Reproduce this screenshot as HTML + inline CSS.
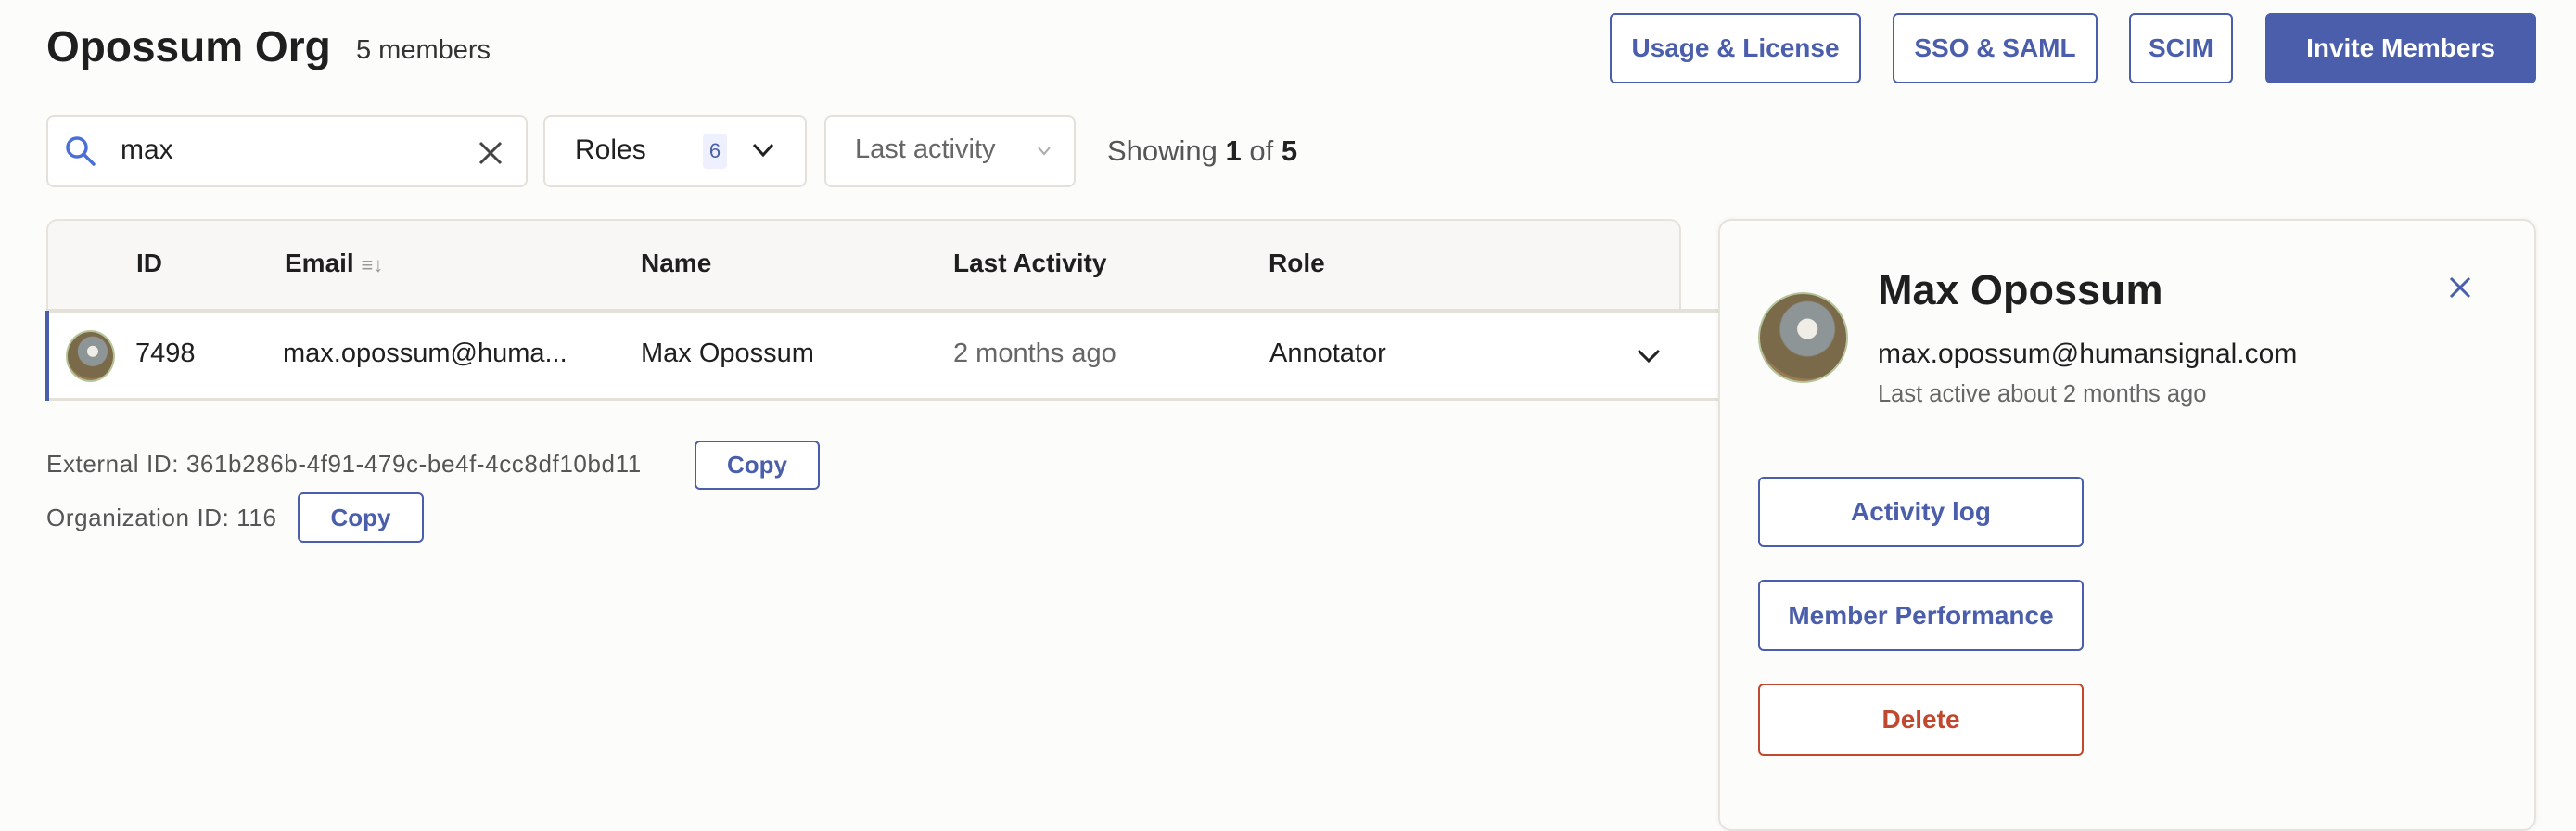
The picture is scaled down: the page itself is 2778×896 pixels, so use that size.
<!DOCTYPE html>
<html><head><meta charset="utf-8"><style>
*{box-sizing:border-box;margin:0;padding:0}
body{width:2778px;height:866px;background:#fcfcfb;font-family:"Liberation Sans",sans-serif;color:#1f1f1f;position:relative;overflow:hidden}
.a{position:absolute}
.btn{position:absolute;border:2px solid #4a5eab;border-radius:6px;color:#4a5eab;font-weight:bold;font-size:28px;display:flex;align-items:center;justify-content:center;background:#fff}
.box{position:absolute;border:2px solid #e4e1da;border-radius:8px;background:#fff}
.h{font-weight:bold;font-size:28px;position:absolute;top:268px}
.c{font-size:29px;position:absolute;top:365px}
.av{position:absolute;border-radius:50%;background:radial-gradient(circle at 55% 40%,#f0ece6 0 14%,#8d9597 15% 38%,#7b6a4a 40% 70%,#9a7c55 72%);border:2px solid #b5c59a}
</style></head><body>
<div class="a" style="left:50px;top:23px;font-size:46px;font-weight:bold">Opossum Org</div>
<div class="a" style="left:384px;top:38px;font-size:29px;color:#333">5 members</div>

<div class="btn" style="left:1736px;top:14px;width:271px;height:76px">Usage &amp; License</div>
<div class="btn" style="left:2041px;top:14px;width:221px;height:76px">SSO &amp; SAML</div>
<div class="btn" style="left:2296px;top:14px;width:112px;height:76px">SCIM</div>
<div class="btn" style="left:2443px;top:14px;width:292px;height:76px;background:#4a5eab;color:#fff">Invite Members</div>

<div class="box" style="left:50px;top:124px;width:519px;height:78px"></div>
<svg class="a" style="left:68px;top:144px" width="40" height="40" viewBox="0 0 40 40"><circle cx="15" cy="15" r="10" fill="none" stroke="#4a6fd8" stroke-width="3.5"/><path d="M22 22l11 11" stroke="#4a6fd8" stroke-width="3.5" stroke-linecap="round"/></svg>
<div class="a" style="left:130px;top:145px;font-size:30px">max</div>
<svg class="a" style="left:514px;top:150px" width="30" height="30"><path d="M4 4l22 22M26 4L4 26" stroke="#444" stroke-width="3"/></svg>

<div class="box" style="left:586px;top:124px;width:284px;height:78px"></div>
<div class="a" style="left:620px;top:145px;font-size:30px">Roles</div>
<div class="a" style="left:758px;top:144px;width:26px;height:38px;background:#eef1fd;color:#4a5eab;font-size:22px;text-align:center;line-height:38px;border-radius:4px">6</div>
<svg class="a" style="left:810px;top:153px" width="26" height="18"><path d="M3 3l10 11L23 3" fill="none" stroke="#222" stroke-width="3"/></svg>

<div class="box" style="left:889px;top:124px;width:271px;height:78px"></div>
<div class="a" style="left:922px;top:145px;font-size:29px;color:#666">Last activity</div>
<svg class="a" style="left:1118px;top:157px" width="16" height="12"><path d="M2 2l6 7 6-7" fill="none" stroke="#aaa" stroke-width="2"/></svg>
<div class="a" style="left:1194px;top:145px;font-size:31px;color:#555">Showing <b style="color:#222">1</b> of <b style="color:#222">5</b></div>

<div class="a" style="left:50px;top:236px;width:1763px;height:99px;background:#f8f7f5;border:2px solid #e6e3dc;border-bottom:none;border-radius:12px 12px 0 0"></div>
<div class="a" style="left:50px;top:333px;width:1810px;height:4px;background:#e4e1d9"></div>
<div class="a" style="left:50px;top:337px;width:1810px;height:94px;background:#fff"></div>
<div class="a" style="left:50px;top:429px;width:1810px;height:3px;background:#e4e1d9"></div>
<div class="a" style="left:48px;top:335px;width:5px;height:97px;background:#4a5eab"></div>
<div class="h" style="left:147px">ID</div>
<div class="h" style="left:307px">Email <span style="color:#999;font-weight:normal;font-size:22px">≡↓</span></div>
<div class="h" style="left:691px">Name</div>
<div class="h" style="left:1028px">Last Activity</div>
<div class="h" style="left:1368px">Role</div>
<div class="av" style="left:71px;top:356px;width:53px;height:56px"></div>
<div class="c" style="left:146px">7498</div>
<div class="c" style="left:305px">max.opossum@huma...</div>
<div class="c" style="left:691px">Max Opossum</div>
<div class="c" style="left:1028px;color:#666">2 months ago</div>
<div class="c" style="left:1369px">Annotator</div>
<svg class="a" style="left:1764px;top:375px" width="28" height="18"><path d="M3 3l11 11L25 3" fill="none" stroke="#222" stroke-width="3"/></svg>

<div class="a" style="left:50px;top:485px;font-size:26px;color:#555;letter-spacing:0.6px">External ID: 361b286b-4f91-479c-be4f-4cc8df10bd11</div>
<div class="btn" style="left:749px;top:475px;width:135px;height:53px;font-size:26px">Copy</div>
<div class="a" style="left:50px;top:543px;font-size:26px;color:#555;letter-spacing:0.6px">Organization ID: 116</div>
<div class="btn" style="left:321px;top:531px;width:136px;height:54px;font-size:26px">Copy</div>

<div class="a" style="left:1853px;top:236px;width:882px;height:660px;background:#fcfcfb;border:2px solid #e6e3dc;border-radius:14px;box-shadow:0 0 6px rgba(0,0,0,.06)"></div>
<div class="av" style="left:1896px;top:315px;width:97px;height:98px"></div>
<div class="a" style="left:2025px;top:287px;font-size:45px;font-weight:bold">Max Opossum</div>
<div class="a" style="left:2025px;top:365px;font-size:30px">max.opossum@humansignal.com</div>
<div class="a" style="left:2025px;top:411px;font-size:25.5px;color:#666">Last active about 2 months ago</div>
<svg class="a" style="left:2640px;top:297px" width="26" height="26"><path d="M3 3l20 20M23 3L3 23" stroke="#4a5eab" stroke-width="3"/></svg>
<div class="btn" style="left:1896px;top:514px;width:351px;height:76px">Activity log</div>
<div class="btn" style="left:1896px;top:625px;width:351px;height:77px">Member Performance</div>
<div class="btn" style="left:1896px;top:737px;width:351px;height:78px;border-color:#c0482e;color:#c0482e">Delete</div>
</body></html>
